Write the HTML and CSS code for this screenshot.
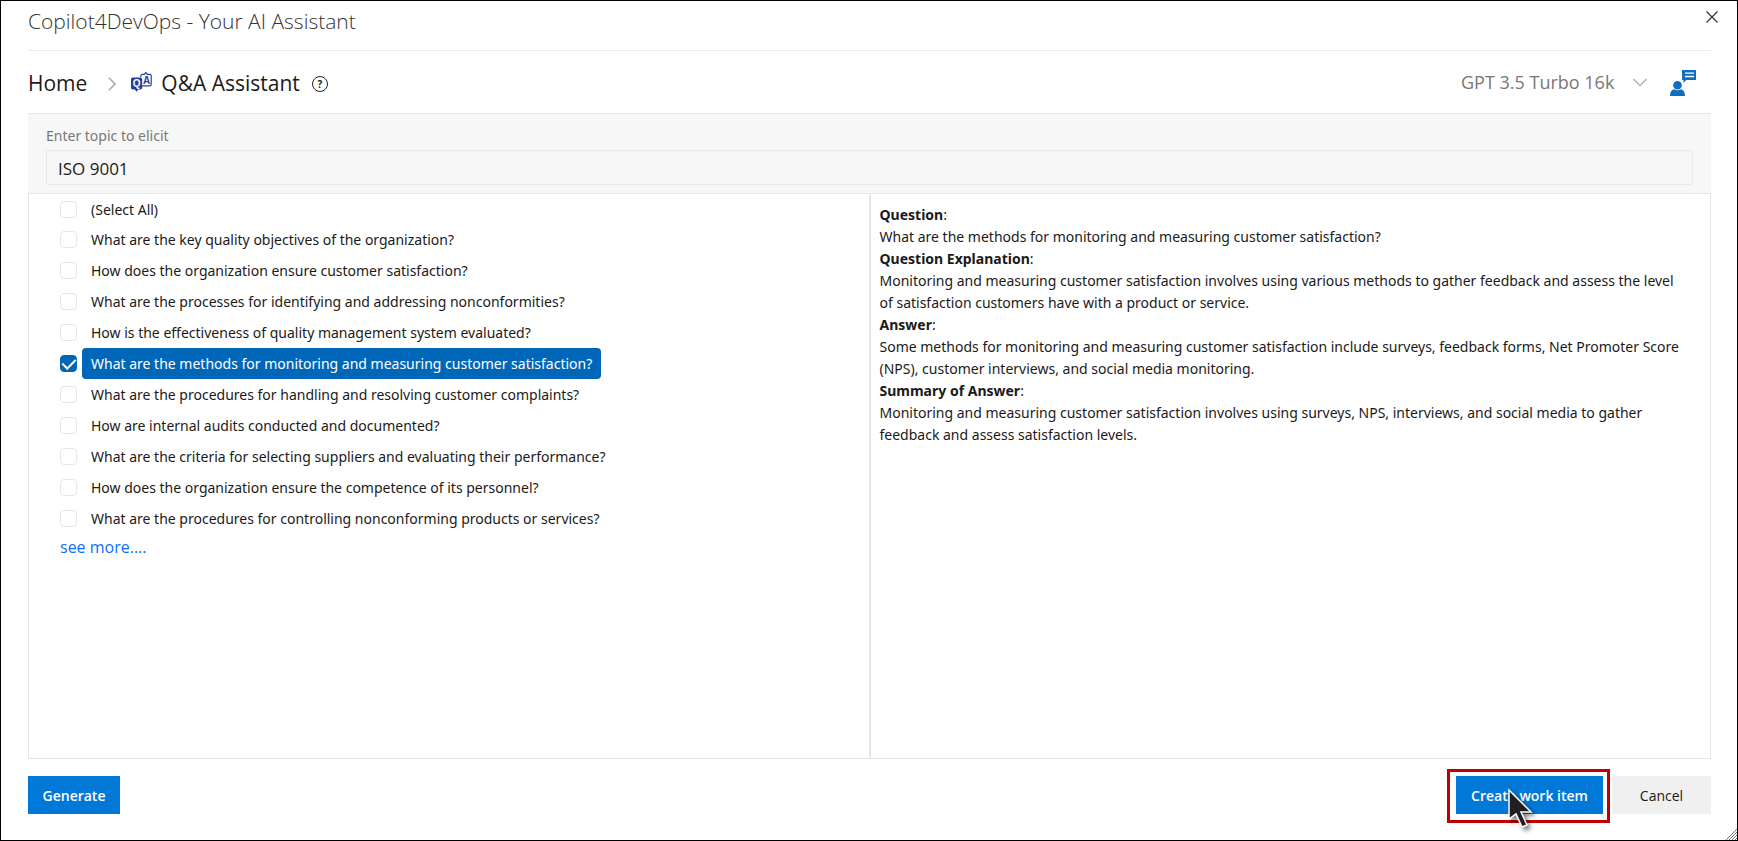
FILE: index.html
```html
<!DOCTYPE html>
<html lang="en">
<head>
<meta charset="utf-8">
<meta name="viewport" content="width=device-width, initial-scale=1">
<title>Copilot4DevOps - Your AI Assistant</title>
<link rel="stylesheet" href="styles.css">
</head>
<body>
<div class="dialog">
  <header class="titlebar">
    <h1 class="title">Copilot4DevOps - Your AI Assistant</h1>
    <button class="close" type="button" aria-label="Close">
      <svg width="12" height="12" viewBox="0 0 12 12" fill="none" stroke="#333" stroke-width="1.2"><path d="M.5.5l11 11M11.5.5l-11 11"/></svg>
    </button>
  </header>

  <nav class="toolbar">
    <a class="crumb" href="#">Home</a>
    <svg class="crumb-sep" width="8" height="14" viewBox="0 0 8 14" fill="none" stroke="#a9adbd" stroke-width="1.6"><path d="M.8.8L7 7 .8 13.2"/></svg>
    <svg class="qa-icon" width="21" height="20" viewBox="0 0 21 20">
      <path d="M9.800 5V4a1.600 1.600 0 0 1 1.600-1.600h1.800L14.800.6l1.600 1.800h2.200A1.600 1.600 0 0 1 20.200 4v8.300a1.600 1.600 0 0 1-1.600 1.600H11" fill="#fff" stroke="#24409a" stroke-width="1.200"/>
      <path d="M1.800 5.500h7.600A1.800 1.800 0 0 1 11.200 7.300v8.400a1.800 1.800 0 0 1-1.800 1.800H7.300L5.600 19.800l-1.700-2.300H1.800A1.800 1.800 0 0 1 0 15.700V7.300a1.800 1.800 0 0 1 1.800-1.800z" fill="#24409a"/>
      <text class="qa-a" x="15.500" y="11.800" text-anchor="middle">A</text>
      <text class="qa-q" x="5.600" y="15.100" text-anchor="middle">Q</text>
    </svg>
    <span class="crumb">Q&amp;A Assistant</span>
    <button class="help" type="button" aria-label="Help">?</button>
    <div class="model">
      <select class="model-select" aria-label="Model"><option>GPT 3.5 Turbo 16k</option></select>
      <svg class="model-arrow" width="14" height="9" viewBox="0 0 14 9" fill="none" stroke="#a9adbd" stroke-width="1.300"><path d="M.6 1L7 7.600 13.400 1"/></svg>
    </div>
    <button class="feedback" type="button" aria-label="Feedback">
      <svg width="26" height="26" viewBox="0 0 26 26" fill="#106ebe">
        <path d="M12 0h14v10H16.300L13.500 13V10H12z"/>
        <path d="M15 3.200h9M15 6.500h9" stroke="#fff" stroke-width="1.300"/>
        <circle cx="7.500" cy="15.300" r="4.300"/>
        <path d="M0 26c0-4 1.400-6 4-6.800 2 1.500 5 1.500 7 0 2.600.8 4 2.800 4 6.800z"/>
      </svg>
    </button>
  </nav>

  <section class="topic">
    <label class="topic-label" for="topic">Enter topic to elicit</label>
    <input class="topic-input" id="topic" type="text" value="ISO 9001">
  </section>

  <main class="panels">
    <section class="questions">
      <ul class="list">
        <li class="row select-all"><input class="check" type="checkbox" id="q0"><label class="row-label" for="q0">(Select All)</label></li>
        <li class="row"><input class="check" type="checkbox" id="q1"><label class="row-label" for="q1">What are the key quality objectives of the organization?</label></li>
        <li class="row"><input class="check" type="checkbox" id="q2"><label class="row-label" for="q2">How does the organization ensure customer satisfaction?</label></li>
        <li class="row"><input class="check" type="checkbox" id="q3"><label class="row-label" for="q3">What are the processes for identifying and addressing nonconformities?</label></li>
        <li class="row"><input class="check" type="checkbox" id="q4"><label class="row-label" for="q4">How is the effectiveness of quality management system evaluated?</label></li>
        <li class="row"><input class="check" type="checkbox" id="q5" checked><label class="row-label selected" for="q5">What are the methods for monitoring and measuring customer satisfaction?</label></li>
        <li class="row"><input class="check" type="checkbox" id="q6"><label class="row-label" for="q6">What are the procedures for handling and resolving customer complaints?</label></li>
        <li class="row"><input class="check" type="checkbox" id="q7"><label class="row-label" for="q7">How are internal audits conducted and documented?</label></li>
        <li class="row"><input class="check" type="checkbox" id="q8"><label class="row-label" for="q8">What are the criteria for selecting suppliers and evaluating their performance?</label></li>
        <li class="row"><input class="check" type="checkbox" id="q9"><label class="row-label" for="q9">How does the organization ensure the competence of its personnel?</label></li>
        <li class="row"><input class="check" type="checkbox" id="q10"><label class="row-label" for="q10">What are the procedures for controlling nonconforming products or services?</label></li>
      </ul>
      <a class="more" href="#">see more....</a>
    </section>
    <section class="details">
      <p class="para"><strong>Question</strong>:</p>
      <p class="para">What are the methods for monitoring and measuring customer satisfaction?</p>
      <p class="para"><strong>Question Explanation</strong>:</p>
      <p class="para">Monitoring and measuring customer satisfaction involves using various methods to gather feedback and assess the level of satisfaction customers have with a product or service.</p>
      <p class="para"><strong>Answer</strong>:</p>
      <p class="para">Some methods for monitoring and measuring customer satisfaction include surveys, feedback forms, Net Promoter Score (NPS), customer interviews, and social media monitoring.</p>
      <p class="para"><strong>Summary of Answer</strong>:</p>
      <p class="para">Monitoring and measuring customer satisfaction involves using surveys, NPS, interviews, and social media to gather feedback and assess satisfaction levels.</p>
    </section>
  </main>

  <footer class="actions">
    <button class="btn primary generate" type="button">Generate</button>
    <div class="highlight">
      <button class="btn primary create" type="button">Create work item</button>
      <svg class="cursor" width="38" height="52" viewBox="0 0 38 52">
        <path d="M2 2v29l7-5 6 13 5-2-6-13h10z" fill="#231f20" stroke="#fff" stroke-width="1.500"/>
      </svg>
    </div>
    <button class="btn cancel" type="button">Cancel</button>
  </footer>
  <svg class="grip" width="11" height="11" viewBox="0 0 11 11" fill="none" stroke="#777"><path d="M0 11L11 0M3 11l8-8M6 11l5-5M9 11l2-2"/></svg>
</div>
</body>
</html>
```
FILE: styles.css
```css
* { box-sizing: border-box; }

body {
  margin: 0;
  font-family: "Open Sans", "Noto Sans", sans-serif;
  font-size: 14px;
  color: #1b1a19;
  background: #fff;
}

button, input, select { font: inherit; color: inherit; }

.dialog {
  position: relative;
  display: flex;
  flex-direction: column;
  min-height: 100vh;
  padding: 0 26px 26px 27px;
  border: 1px solid #000;
}

.titlebar {
  display: flex;
  justify-content: space-between;
  align-items: flex-start;
  height: 50px;
  padding-top: 6px;
  border-bottom: 1px solid #eaeaea;
}

.title {
  margin: 0;
  font-size: 21px;
  line-height: 28px;
  font-weight: 300;
  color: #333;
}

.close, .help, .feedback {
  display: flex;
  padding: 0;
  border: 0;
  background: none;
}

.close { margin: 4px -7px 0 0; }

.toolbar {
  display: flex;
  align-items: center;
  height: 62px;
  padding: 2px 15px 0 0;
  font-size: 21px;
}

.crumb { color: #1b1a19; text-decoration: none; }
.crumb-sep { margin: 2px 15px 0 21px; }
.qa-icon { margin: 0 9px 2px 0; }
.qa-a { font: 700 10px "Liberation Sans", sans-serif; fill: #24409a; }
.qa-q { font: 700 10px "Liberation Sans", sans-serif; fill: #fff; }

.help {
  justify-content: center;
  align-items: center;
  width: 16px;
  height: 16px;
  margin: 2px 0 0 12px;
  border: 1px solid #222;
  border-radius: 50%;
  font-size: 10px;
  font-weight: 700;
}

.model {
  display: flex;
  align-items: center;
  gap: 18px;
  margin: 0 0 2px auto;
}

.model-select {
  padding: 0;
  border: 0;
  background: none;
  appearance: none;
  font-size: 18px;
  color: #777;
}

.feedback { margin-left: 23px; }

.topic {
  display: flex;
  flex-direction: column;
  height: 80px;
  padding: 12px 18px 0;
  border-top: 1px solid #e6e6e6;
  background: #f7f7f7;
}

.topic-label {
  line-height: 20px;
  margin-bottom: 4px;
  font-family: "Noto Sans", sans-serif;
  color: #777;
}

.topic-input {
  height: 35px;
  padding: 1px 11px 0;
  border: 1px solid #e9e9e9;
  border-radius: 2px;
  background: #f7f7f7;
  font-size: 17px;
}

.panels {
  display: grid;
  grid-template-columns: 1fr 1fr;
  flex: 1;
  border: 1px solid #e6e6e6;
  font-family: "Noto Sans", sans-serif;
}

.questions {
  padding-left: 31px;
  border-right: 1px solid #e6e6e6;
}

.list { margin: 0; padding: 0; list-style: none; }

.row {
  display: flex;
  align-items: center;
  gap: 5px;
  height: 31px;
}

.select-all { height: 30px; }

.check {
  flex: none;
  width: 17px;
  height: 17px;
  margin: 0;
  border: 1px solid #e6e6e6;
  border-radius: 4px;
  appearance: none;
}

.check:checked {
  display: flex;
  justify-content: center;
  border-color: #0067b8;
  background: #0067b8;
}

.check:checked::before {
  content: "";
  width: 6px;
  height: 11px;
  border: solid #fff;
  border-width: 0 2px 2px 0;
  transform: rotate(45deg);
}

.row-label {
  padding: 0 9px;
  line-height: 31px;
  border-radius: 4px;
}

.selected { background: #0067b8; color: #fff; }

.more {
  font-family: "Open Sans", sans-serif;
  font-size: 16px;
  line-height: 26px;
  color: #0d6efd;
  text-decoration: none;
}

.details {
  padding: 10px 26px 10px 9px;
  border-left: 1px solid #e6e6e6;
}

.para { margin: 0; line-height: 22px; }

.actions {
  display: flex;
  align-items: center;
  gap: 9px;
  padding-top: 17px;
}

.btn {
  height: 38px;
  padding: 0;
  border: 0;
}

.primary { background: #0078d7; color: #fff; font-weight: 600; }
.generate { width: 92px; margin-right: auto; }
.create { width: 147px; }
.cancel { width: 99px; background: #f0f0f0; }

.highlight { position: relative; }

.highlight::after {
  content: "";
  position: absolute;
  inset: -7px -7px -9px -9px;
  border: 3px solid #c00000;
}

.cursor {
  position: absolute;
  left: 51px;
  top: 12px;
  z-index: 1;
  filter: drop-shadow(3px 3px 2px rgba(0, 0, 0, 0.5));
}

.grip { position: absolute; right: 0; bottom: 0; }
```
